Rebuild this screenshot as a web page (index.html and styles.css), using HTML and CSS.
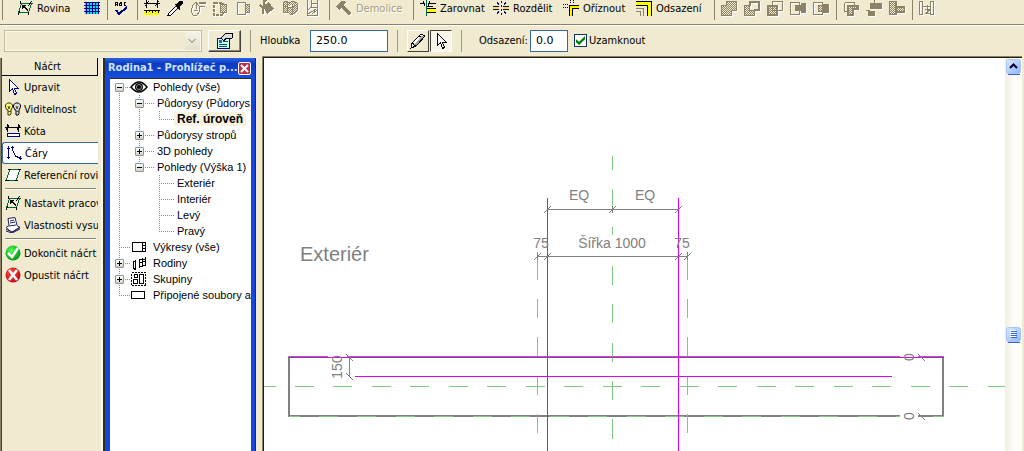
FILE: index.html
```html
<!DOCTYPE html>
<html lang="cs">
<head>
<meta charset="utf-8">
<title>Rodina1</title>
<link rel="stylesheet" href="styles.css">
</head>
<body>
<svg class="defs" aria-hidden="true">
  <defs>
    <pattern id="dots" width="2" height="2" patternUnits="userSpaceOnUse"><rect width="2" height="2" fill="#f1ebd0"/><path fill="#8b8268" d="M0 0h1v1h-1zM1 1h1v1h-1z"/></pattern>
    <linearGradient id="thumb" x2="1" y2="1"><stop stop-color="#dce9ff"/><stop offset="1" stop-color="#8fb4fb"/></linearGradient>
    <radialGradient id="ok" cx=".4" cy=".35" r=".7"><stop stop-color="#5f5"/><stop offset="1" stop-color="#008c14"/></radialGradient>
    <radialGradient id="no" cx=".4" cy=".35" r=".7"><stop stop-color="#ff5040"/><stop offset="1" stop-color="#c00010"/></radialGradient>
  </defs>
</svg>
<nav class="toolbar" aria-label="Nástroje">
  <i class="grip"></i>
  <button class="tool rovina"><svg class="icon" viewBox="0 0 16 16"><path d="M4.500 3.500h11M.5 12.500h11M4.500 3.500l-3 9M14.500 3.500l-3 9" stroke="#063" fill="none"/><path d="M3.500 1v3M15 1l-4 5M1 15l2-4M11.500 12v3" stroke="#000"/><path d="M5 5h4l-1 1 3 4-1 1-3-4-2 2z" fill="#000"/></svg><span>Rovina</span></button>
  <button class="tool" aria-label="Rastr"><svg class="icon" viewBox="0 0 16 16"><path fill="#00e0f0" d="M1 2h14v12h-14z"/><path stroke="#008" d="M2.500 2v12M5.500 2v12M8.500 2v12M11.500 2v12M14.500 2v12M0 2.500h16M0 5.500h16M0 8.500h16M0 11.500h16"/></svg></button>
  <i class="sep"></i>
  <button class="tool" aria-label="Pravopis"><svg class="icon" viewBox="0 0 16 16"><path d="M1.500 6v-3l1-1h1v4M1.500 4.500h2M5.500 2.500v3h2v-3h-2M5.500 3.500h2M12 2.500h-2v3h2" stroke="#000" fill="none"/><path d="M2 10l3 4 8-7" stroke="#008" stroke-width="2" fill="none"/></svg></button>
  <i class="sep"></i>
  <button class="tool" aria-label="Kóta"><svg class="icon" viewBox="0 0 16 16"><path d="M2.500 0v8M13.500 0v8M0 3.500h16M1 6l4-5M11 6l4-5" stroke="#000" fill="none"/><path fill="#ff0" d="M0 10h16v5h-16z"/><path d="M0 10.500h16M2.500 10v3M5.500 10v2M8.500 10v3M11.500 10v2M14.500 10v3" stroke="#000"/></svg></button>
  <button class="tool" aria-label="Kapátko"><svg class="icon" viewBox="0 0 16 16"><path d="M2 13l7-7 2 2-7 7H1z" fill="#fff" stroke="#000"/><path d="M8 4l2 0 3-3h2v3l-3 3v2z" fill="#000" stroke="#000"/></svg></button>
  <button class="tool" disabled aria-label="Pero"><svg class="icon" viewBox="0 0 16 16"><path d="M1 11l2-6 3-3 3 4 1 5-3 4H3zM6 3v6M4 10h4M9 2.500h7M9 3.500h7M10 6.500h5" fill="none" stroke="#8b8268"/></svg></button>
  <button class="tool" disabled aria-label="Výřez"><svg class="icon" viewBox="0 0 16 16"><path d="M2 2.500h8v12h-9v-12h4" fill="none" stroke="#8b8268" stroke-width="2" stroke-dasharray="3 1"/><path fill="url(#dots)" stroke="#8b8268" d="M7 4.500h6v8h-6z"/></svg></button>
  <button class="tool" disabled aria-label="Plocha"><svg class="icon" viewBox="0 0 16 16"><path d="M1.500 2.500h8v12h-8z" fill="none" stroke="#8b8268"/><path fill="url(#dots)" stroke="#8b8268" d="M9.500 4.500h4v8h-4z"/></svg></button>
  <button class="tool" disabled aria-label="Barva"><svg class="icon" viewBox="0 0 16 16"><path d="M4 6l6-4 5 7-7 5z" fill="#8b8268"/><path d="M5 6V1l3-1M1 5l3 3v6" fill="none" stroke="#8b8268" stroke-width="2"/></svg></button>
  <button class="tool" disabled aria-label="Stěny"><svg class="icon" viewBox="0 0 16 16"><path d="M1 3l3-2 3 2 4-2 4 2v8l-5 4-5-3-4 1zM5 3v9M10 5v10M1 6l9 2 4-3" fill="url(#dots)" stroke="#8b8268"/></svg></button>
  <button class="tool" disabled aria-label="Řez"><svg class="icon" viewBox="0 0 16 16"><path d="M2.500 0v15h10v-15M6 0v7h6M3 10l4-4M3 14l8-5M7 14l5-4M7 3h5" fill="none" stroke="#8b8268"/></svg></button>
  <i class="sep last"></i>
  <button class="tool demolice" disabled><svg class="icon" viewBox="0 0 16 16"><path d="M0 6l6-5 5 1-4 3 8 8-2 2-8-7-2 2z" fill="#8b8268"/></svg><span>Demolice</span></button>
  <i class="sep"></i>
  <button class="tool zarovnat"><svg class="icon" viewBox="0 0 16 16"><path stroke="#064" d="M6.500 0v16"/><path stroke="#000" d="M0 3.500h5M3 1l2 5M16 3.500h-6M10 1l-2 5" fill="none"/><path fill="#ff0" d="M8 9h8v3h-8z"/><path stroke="#000" d="M7 8.500h9M7 12.500h9M7 6.500h6"/></svg><span>Zarovnat</span></button>
  <button class="tool rozdelit"><svg class="icon" viewBox="0 0 16 16"><path fill="#fe0" d="M0 7h6v2h-6zM10 7h6v2h-6z"/><path stroke="#008" d="M0 6.500h6M0 9.500h6M10 6.500h6M10 9.500h6M8.500 1v2M8.500 5v2M8.500 9v2M8.500 13v2M4 2l2 3M13 2l-2 3M4 14l2-3M13 14l-2-3"/></svg><span>Rozdělit</span></button>
  <button class="tool oriznout"><svg class="icon" viewBox="0 0 16 16"><path stroke="#000" stroke-dasharray="1 1" d="M0 4.500h6M0 7.500h6M7.500 0v4M10.500 0v4"/><path d="M8 16V7h8" stroke="#000" stroke-width="4" fill="none"/><path d="M8 16V7h8" stroke="#fe0" stroke-width="2" fill="none"/></svg><span>Oříznout</span></button>
  <button class="tool odsazeni"><svg class="icon" viewBox="0 0 16 16"><path d="M0 3h13v13" stroke="#000" stroke-width="5" fill="none"/><path d="M0 3h13v13" stroke="#ff0" stroke-width="3" fill="none"/><path d="M0 8.500h7.500V16M0 11.500h4.500V16" stroke="#8b8268" fill="none"/></svg><span>Odsazení</span></button>
  <i class="sep"></i>
  <button class="tool" disabled aria-label="Spojit"><svg class="icon" viewBox="0 0 16 16"><path fill="url(#dots)" stroke="#8b8268" d="M5.500 1.500h10v9h-5v5h-10v-10h5z"/></svg></button>
  <button class="tool" disabled aria-label="Odečíst"><svg class="icon" viewBox="0 0 16 16"><path fill="none" stroke="#8b8268" stroke-width="2" d="M6 6v-4h9v8h-5"/><path fill="url(#dots)" stroke="#8b8268" d="M.5 5.500h5v5h5v5h-10z"/></svg></button>
  <button class="tool" disabled aria-label="Průnik"><svg class="icon" viewBox="0 0 16 16"><path fill="url(#dots)" stroke="#8b8268" stroke-width="2" d="M1 6h9v9h-9z"/><path fill="none" stroke="#8b8268" d="M5.500 1.500h10v9h-10z"/></svg></button>
  <button class="tool" disabled aria-label="Vyříznout"><svg class="icon" viewBox="0 0 16 16"><path fill="none" stroke="#8b8268" d="M.5 2.500h9v12h-9z"/><path fill="#8b8268" d="M5 5h6v-2h5v10h-5v-2h-6z"/></svg></button>
  <button class="tool" disabled aria-label="Nevyřezávat"><svg class="icon" viewBox="0 0 16 16"><path fill="none" stroke="#8b8268" d="M.5 2.500h9v12h-9z"/><path fill="#8b8268" d="M10 4h6v9h-6z"/><path fill="url(#dots)" stroke="#8b8268" d="M5.500 5.500h4v6h-4z"/></svg></button>
  <i class="sep"></i>
  <button class="tool" disabled aria-label="Geometrie"><svg class="icon" viewBox="0 0 16 16"><path fill="none" stroke="#8b8268" d="M1.500 2.500h10v3M1.500 2.500v9h3"/><path fill="url(#dots)" stroke="#8b8268" stroke-width="2" d="M5 6h10v3h-5v6h-5z"/></svg></button>
  <button class="tool" disabled aria-label="Rozdělit plochu"><svg class="icon" viewBox="0 0 16 16"><path fill="#8b8268" d="M4 3h12v6h-12zM2 11h7v5h-7zM8 0h1v3h-1zM0 10h4v1h-4z"/></svg></button>
  <button class="tool" disabled aria-label="Připojit"><svg class="icon" viewBox="0 0 16 16"><path fill="url(#dots)" stroke="#8b8268" d="M.5 1.500h7v5h8v6h-8v2h-7z"/><path stroke="#8b8268" stroke-width="2" d="M7 1v14M8 7h7M8 12h7"/></svg></button>
  <i class="sep"></i>
  <button class="tool" disabled aria-label="Stěna"><svg class="icon" viewBox="0 0 16 16"><path fill="none" stroke="#8b8268" d="M.5 1.500h3v13h-3zM11.500 1.500h3v13h-3zM4 6.500h8M6 9.500h5l-4 4h4M8.500 5v9"/></svg></button>
</nav>
<form class="options">
  <select class="type" disabled aria-label="Typ"><option></option></select>
  <button type="button" class="props" aria-label="Vlastnosti"><svg class="icon" viewBox="0 0 16 16"><path d="M.5 5.500h12v10h-12z" fill="#cfe" stroke="#008"/><path fill="#26b" d="M2 7h3v3h-3z"/><path stroke="#056" d="M6 8.500h5M2 11.500h8M2 13.500h8"/><path d="M4 5l4-4 7-1v5l-4 1-2-1-2 3z" fill="#ddd" stroke="#000"/></svg></button>
  <i class="sep"></i>
  <label class="depth-label" for="depth">Hloubka</label>
  <input class="depth" id="depth" type="text" value="250.0">
  <i class="sep"></i>
  <button type="button" class="mode" aria-label="Kreslit"><svg class="icon" viewBox="0 0 16 16"><path d="M1 15l1-5 9-9 4 2-9 10z" fill="#fff" stroke="#000"/><path d="M2 10l4 3M9 3l4 3" stroke="#000"/><path d="M5 12l8-9" stroke="#aaa" stroke-width="2"/></svg></button>
  <button type="button" class="mode pressed" aria-label="Vybrat"><svg class="icon" viewBox="0 0 16 16"><path d="M4.500.5v12l3-3 2 6 2-1-2-5h4z" fill="#fff" stroke="#000"/></svg></button>
  <i class="sep"></i>
  <label class="offset-label" for="offset">Odsazení:</label>
  <input class="offset" id="offset" type="text" value="0.0">
  <label class="lock"><input type="checkbox" checked>Uzamknout</label>
</form>
<main class="work">
  <aside class="design">
    <h2>Náčrt</h2>
    <button><svg class="icon" viewBox="0 0 16 16"><path d="M4.500.5v12l3-3 2 6 2-1-2-5h4z" fill="#fff" stroke="#008"/></svg><span>Upravit</span></button>
    <button><svg class="icon smooth" viewBox="0 0 16 16"><path d="M2 9L.5 6V4l2-2h3l2 2v2L6 9v4l-1 1H3V9z" fill="#ff6" stroke="#331"/><path d="M10 9L8.500 6V4l2-2h3l2 2v2L14 9v4l-1 1h-2V9z" fill="#ddd" stroke="#000"/><path d="M3 10.500h3M11 10.500h3M3 5l1 3 1-3M11 5l1 3 1-3" stroke="#553" fill="none"/></svg><span>Viditelnost</span></button>
    <button><svg class="icon" viewBox="0 0 16 16"><path d="M2.500 1v8M13.500 1v8M0 4.500h16M1 7l3-5M12 7l3-5" stroke="#000"/><path d="M2 10.500h12v3h-12z" fill="#fff" stroke="#008"/></svg><span>Kóta</span></button>
    <button class="current"><svg class="icon" viewBox="0 0 16 16"><path d="M2.500 1v13M1 3.500h3M1 12.500h3M6.500 1v4l3 6 4 2h3M5 2.500h3M14.500 11v4" stroke="#008" fill="none"/></svg><span>Čáry</span></button>
    <button><svg class="icon" viewBox="0 0 16 16"><path d="M5 2.500h10l-4 11H1z" fill="#fff" stroke="#063"/><path d="M3 2.500h3M13 2.500h3M0 13.500h4M10 13.500h3" stroke="#000"/></svg><span>Referenční rovina</span></button>
    <hr>
    <button><svg class="icon" viewBox="0 0 16 16"><path d="M4.500 3.500h11M.5 12.500h11M4.500 3.500l-3 9M14.500 3.500l-3 9" stroke="#063" fill="#fff"/><path d="M3.500 1v3M15 1l-4 5M1 15l2-4M11.500 12v3" stroke="#000"/><path d="M5 5h4l-1 1 3 4-1 1-3-4-2 2z" fill="#000"/></svg><span>Nastavit pracovní rovinu</span></button>
    <button><svg class="icon smooth" viewBox="0 0 16 16"><path d="M3 1.500l7-1 2 8 3 2-8 5-6-5 3-2z" fill="#fff" stroke="#225"/><path d="M5 4l4-1M5 6l5-1M4 9l7-1M1 12l6 3 8-5M1 14l6 2 8-4" stroke="#225" fill="none"/></svg><span>Vlastnosti vysunutí</span></button>
    <hr>
    <button><svg class="icon smooth" viewBox="0 0 16 16"><circle cx="8" cy="8" r="7.500" fill="url(#ok)"/><path d="M3 8l4 4 6-9" stroke="#fff" stroke-width="2.500" fill="none"/></svg><span>Dokončit náčrt</span></button>
    <button><svg class="icon smooth" viewBox="0 0 16 16"><circle cx="8" cy="8" r="7.500" fill="url(#no)"/><path d="M4 3l8 10M12 3L4 13" stroke="#fff" stroke-width="2.500"/></svg><span>Opustit náčrt</span></button>
  </aside>
  <section class="browser">
    <header><h2>Rodina1 - Prohlížeč p...</h2><button aria-label="Zavřít"><svg viewBox="0 0 9 9"><path d="M1 1l7 7M8 1L1 8" stroke="#fff" stroke-width="2"/></svg></button></header>
    <div class="tree" role="tree">
      <div class="row" role="treeitem"><i class="cell first"><button class="exp" aria-label="Sbalit"></button></i><svg class="node smooth" viewBox="0 0 18 14"><path d="M1 7q4-5 8-5t8 5q-4 5-8 5t-8-5z" fill="#fff" stroke="#000" stroke-width="1.500"/><circle cx="9" cy="7" r="4"/><circle cx="9" cy="7" r="2.500" fill="none" stroke="#999"/></svg><span>Pohledy (vše)</span></div>
      <div class="row" role="treeitem"><i class="cell v"></i><i class="cell wide t"><button class="exp" aria-label="Sbalit"></button></i><span>Půdorysy (Půdorys podlaží)</span></div>
      <div class="row" role="treeitem"><i class="cell v"></i><i class="cell v"></i><i class="cell wide l"></i><strong>Ref. úroveň</strong></div>
      <div class="row" role="treeitem"><i class="cell v"></i><i class="cell wide t"><button class="exp plus" aria-label="Rozbalit"></button></i><span>Půdorysy stropů</span></div>
      <div class="row" role="treeitem"><i class="cell v"></i><i class="cell wide t"><button class="exp plus" aria-label="Rozbalit"></button></i><span>3D pohledy</span></div>
      <div class="row" role="treeitem"><i class="cell v"></i><i class="cell wide l"><button class="exp" aria-label="Sbalit"></button></i><span>Pohledy (Výška 1)</span></div>
      <div class="row" role="treeitem"><i class="cell v"></i><i class="cell"></i><i class="cell wide t"></i><span>Exteriér</span></div>
      <div class="row" role="treeitem"><i class="cell v"></i><i class="cell"></i><i class="cell wide t"></i><span>Interiér</span></div>
      <div class="row" role="treeitem"><i class="cell v"></i><i class="cell"></i><i class="cell wide t"></i><span>Levý</span></div>
      <div class="row" role="treeitem"><i class="cell v"></i><i class="cell"></i><i class="cell wide l"></i><span>Pravý</span></div>
      <div class="row" role="treeitem"><i class="cell t"></i><svg class="node" viewBox="0 0 18 14"><path d="M2.500 2.500h13v9h-13zM12.500 2v10M13 5.500h3M13 8.500h3" fill="#fff" stroke="#000"/></svg><span>Výkresy (vše)</span></div>
      <div class="row" role="treeitem"><i class="cell t"><button class="exp plus" aria-label="Rozbalit"></button></i><svg class="node" viewBox="0 0 18 14"><path d="M3.500 5v7l1 1h1V4M5.500 5v8M9.500 3h6v6l-6 2zM12.500 2v9M9 6.500l7-1M3 5.500h3" fill="none" stroke="#000"/><path d="M9.500 3v9M15.500 1v8" stroke="#000"/></svg><span>Rodiny</span></div>
      <div class="row" role="treeitem"><i class="cell t"><button class="exp plus" aria-label="Rozbalit"></button></i><svg class="node" viewBox="0 0 18 14"><path d="M1.500.5h14v13h-14z" fill="none" stroke="#000" stroke-dasharray="2 1"/><path d="M4.500 2.500h3v3h-3zM3.500 7.500h4v4h-4zM9.500 2.500h4v9h-4z" fill="none" stroke="#000"/></svg><span>Skupiny</span></div>
      <div class="row" role="treeitem"><i class="cell l"></i><svg class="node" viewBox="0 0 18 14"><path d="M1.500 3.500h13v7h-13z" fill="#fff" stroke="#000"/></svg><span>Připojené soubory aplikace Revit</span></div>
    </div>
  </section>
  <section class="view">
    <svg class="drawing" role="img" aria-label="Pohled Exteriér">
      <g transform="translate(-264 -58)" fill="none">
        <g stroke="#808080">
          <path stroke-width="2" d="M289 356v61M943 356v61M288 416h612M918 416h26"/>
          <path d="M289 356.500h39M347 356.500h553M918 356.500h26"/>
        </g>
        <g stroke="#7fc87f">
          <path d="M612.500 156v14M612.500 189v19M612.500 227v8M612.500 266v19M612.500 304v19M612.500 343v19M612.500 381v19M612.500 419v20"/>
          <path d="M537.500 257v23M537.500 299v19M537.500 337v19M537.500 377v18M537.500 414v19M687.500 257v23M687.500 299v19M687.500 337v19M687.500 377v18M687.500 414v19"/>
          <path d="M264 386.500h12"/>
          <path stroke-dasharray="19 19 19 20" d="M295 386.500h710"/>
          <path d="M289 416.500h11M933 416.500h11"/>
          <path stroke-dasharray="19 19 19 20" d="M319 416.500h581"/>
        </g>
        <g stroke="#d0f">
          <path d="M547.500 198v900M678.500 198v900M355 376.500h537M289 357.500h655"/>
        </g>
        <g stroke="#808080">
          <path d="M547 209.500h132M612.500 206v7M537 256.500h151M537.500 252v8M687.500 252v8M349.500 357v20"/>
          <path d="M544 213l7-7M609 213l7-7M675 213l7-7M534 260l7-7M544 260l7-7M675 260l7-7M684 260l7-7M346 354l7 7M346 373l7 7M918 354l7 7M918 413l7 7"/>
        </g>
        <g class="dims">
          <text x="579" y="200">EQ</text><text x="645" y="200">EQ</text>
          <text x="612" y="248">Šířka 1000</text><text x="541" y="248">75</text><text x="682" y="248">75</text>
          <text transform="translate(342 367) rotate(-90)">150</text>
          <text transform="translate(914 357) rotate(-90)">0</text>
          <text transform="translate(914 416) rotate(-90)">0</text>
        </g>
        <text class="caption" x="300" y="261">Exteriér</text>
      </g>
    </svg>
    <div class="scroll">
      <button aria-label="Nahoru"><svg viewBox="0 0 17 17"><rect x="1.500" y="1.500" width="14" height="14" rx="2" fill="url(#thumb)" stroke="#a8c4f8"/><path d="M3 16.500h12" stroke="#36c"/><path d="M5 10l3.500-3.500L12 10" fill="none" stroke="#003" stroke-width="2"/></svg></button>
      <button class="thumb" aria-label="Posuvník"><svg viewBox="0 0 17 17"><rect x="1.500" y="1.500" width="14" height="14" rx="2" fill="url(#thumb)" stroke="#a8c4f8"/><path d="M3 16.500h12" stroke="#36c"/><path d="M5 4.500h6M5 6.500h6M5 8.500h6M5 10.500h6" stroke="#fff"/><path d="M6 5.500h6M6 7.500h6M6 9.500h6M6 11.500h6" stroke="#36c"/></svg></button>
    </div>
  </section>
</main>
</body>
</html>
```
FILE: styles.css
```css
* { box-sizing: border-box; }
html, body { height: 100%; }
body {
  margin: 0;
  display: flex;
  flex-direction: column;
  background: #f0ead0;
  color: #000;
  font: 11px/16px "DejaVu Sans Condensed", "DejaVu Sans", sans-serif;
  font-stretch: condensed;
  overflow: hidden;
}
button, input, select { font: inherit; color: inherit; margin: 0; padding: 0; }
button { border: 0; background: none; }
h2 { margin: 0; font-size: 11px; line-height: 18px; }
.defs { width: 0; height: 0; flex: none; display: block; }
.icon { width: 16px; height: 16px; flex: none; display: block; shape-rendering: crispEdges; }
.icon.smooth { shape-rendering: auto; }

.toolbar {
  flex: none;
  height: 25px;
  padding: 0 0 4px 2px;
  display: flex;
  border-bottom: 1px solid #8b8268;
}
.toolbar .grip { width: 12px; margin-right: 3px; border-left: 1px solid #8b8268; }
.tool { flex: none; width: 23px; height: 18px; display: flex; gap: 4px; white-space: nowrap; line-height: 18px; }
.tool:disabled { color: #a39a80; text-shadow: 1px 1px #fff; }
.tool:disabled .icon { filter: drop-shadow(1px 1px 0 #fff); }
.toolbar .sep { flex: none; width: 7px; border-left: 1px solid #8b8268; }
.toolbar .last { margin-left: 1px; }
.rovina { width: 67px; }
.demolice { width: 77px; }
.zarovnat { width: 73px; }
.rozdelit { width: 70px; }
.oriznout { width: 73px; }
.odsazeni { width: 78px; }

.options {
  flex: none;
  height: 31px;
  padding: 3px 0 4px 4px;
  display: flex;
  align-items: center;
  border-top: 1px solid #fff;
}
.options .sep { flex: none; width: 1px; height: 22px; background: #a39a80; margin: 0 9px; }
.type {
  width: 198px;
  height: 22px;
  appearance: none;
  border: 1px solid #c0bca0;
  outline: 1px solid #fbf8ea;
  outline-offset: -2px;
  opacity: 1;
  background:
    linear-gradient(45deg, transparent 5px, #b4b09c 5px 7px, transparent 7px) 182px 8px / 5px 7px no-repeat,
    linear-gradient(-45deg, transparent 5px, #b4b09c 5px 7px, transparent 7px) 187px 8px / 5px 7px no-repeat,
    linear-gradient(#f4f2e6, #e4e0cc) right 1px center / 15px 18px no-repeat,
    #f0ead0;
}
.props, .mode {
  height: 22px;
  display: flex;
  align-items: center;
  justify-content: center;
  border: 1px solid;
  border-color: #fff #404038 #404038 #fff;
}
.props { width: 33px; margin-left: 6px; box-shadow: inset -1px -1px #8b8268; }
.mode { width: 22px; }
.mode + .mode { margin-left: 1px; }
.mode.pressed { border-color: #404038 #fff #fff #404038; background: #f8f5e8; }
.depth-label { width: 50px; }
.offset-label { width: 51px; margin-left: 8px; }
.depth, .offset { height: 22px; padding: 0 5px; border: 1px solid #36699c; background: #fff; font-family: "DejaVu Sans", sans-serif; font-stretch: normal; }
.depth { width: 78px; }
.offset { width: 38px; }
.lock { display: flex; align-items: center; gap: 2px; margin-left: 6px; }
.lock input {
  appearance: none;
  width: 13px;
  height: 13px;
  border: 1px solid #14325c;
  background: #fff;
  display: grid;
  place-items: center;
}
.lock input:checked::before {
  content: "";
  width: 9px;
  height: 9px;
  background: #008000;
  clip-path: polygon(0 35%, 35% 65%, 100% 0, 100% 35%, 35% 100%, 0 70%);
}

.work { flex: 1; min-height: 0; display: flex; }
.design {
  flex: none;
  width: 103px;
  margin-top: 2px;
  padding-right: 5px;
  border-left: 1px solid #8b8268;
  box-shadow: inset 1px 0 #404038, inset -2px 0 #fbf8ea;
}
.design h2 {
  height: 18px;
  margin-left: 1px;
  font-weight: normal;
  text-align: center;
  padding-right: 4px;
  border-right: 1px solid #000;
  border-bottom: 1px solid #000;
}
.design button {
  display: flex;
  align-items: center;
  gap: 3px;
  width: 96px;
  height: 22px;
  margin-left: 1px;
  padding-left: 3px;
  line-height: 18px;
  white-space: nowrap;
  overflow: hidden;
}
.design button span { padding-top: 1px; }
.design .current { background: #fff; border: 1px solid #36699c; border-right: 0; border-radius: 3px 0 0 3px; }
.design hr { height: 2px; margin: 2px 2px 2px 4px; border: 0; border-top: 1px solid #8b8268; background: #fff; }

.browser {
  flex: none;
  width: 153px;
  margin-top: 2px;
  padding: 0 4px 0 5px;
  display: flex;
  flex-direction: column;
  background: #1746dc;
  border: solid #302c20;
  border-width: 0 1px 0 2px;
}
.browser header {
  height: 20px;
  margin: 0 -4px 0 -5px;
  padding: 0 4px 0 3px;
  display: flex;
  align-items: center;
  justify-content: space-between;
  background: linear-gradient(#2a62e8, #0a3cc0 30%, #1550dc);
  color: #d4e2fa;
  white-space: nowrap;
}
.browser header button { width: 13px; height: 13px; display: grid; place-items: center; border: 1px solid #fff; border-radius: 2px; background: #b83048; }
.browser header svg { width: 9px; height: 9px; display: block; }
.tree {
  flex: 1;
  min-height: 0;
  overflow: hidden;
  border-top: 1px solid #302c20;
  background: #fff;
  font-family: "Liberation Sans", Arial, sans-serif;
}
.row { display: flex; align-items: center; height: 16px; white-space: nowrap; }
.row strong { background: #f8f2de; padding: 0 3px; margin-left: -1px; font-size: 12px; line-height: 14px; }
.row span { padding-left: 2px; }
.row .node + span { padding-left: 5px; }
.node { flex: none; width: 18px; height: 14px; shape-rendering: crispEdges; }
.node.smooth { shape-rendering: auto; }
.cell {
  --dots-v: repeating-linear-gradient(#8c8c80 0 1px, transparent 1px 2px);
  --dots-h: repeating-linear-gradient(90deg, #8c8c80 0 1px, transparent 1px 2px);
  flex: none;
  display: flex;
  align-items: center;
  width: 20px;
  height: 16px;
  padding-left: 5px;
}
.wide { width: 25px; }
.v { background: var(--dots-v) 9px 0 / 1px 16px no-repeat; }
.t { background: var(--dots-v) 9px 0 / 1px 16px no-repeat, var(--dots-h) 9px 8px / 16px 1px no-repeat; }
.l { background: var(--dots-v) 9px 0 / 1px 8px no-repeat, var(--dots-h) 9px 8px / 16px 1px no-repeat; }
.first { background: var(--dots-v) 9px 8px / 1px 8px no-repeat, var(--dots-h) 9px 8px / 16px 1px no-repeat; }
.exp {
  width: 9px;
  height: 9px;
  border: 1px solid #7898b5;
  border-radius: 1px;
  background: linear-gradient(#000, #000) center / 5px 1px no-repeat, linear-gradient(#fff, #d8d2c4);
}
.exp.plus { background: linear-gradient(#000, #000) center / 5px 1px no-repeat, linear-gradient(#000, #000) center / 1px 5px no-repeat, linear-gradient(#fff, #d8d2c4); }

.view {
  flex: 1;
  min-width: 0;
  display: flex;
  margin: 0 2px 0 6px;
  background: #fff;
  border: 1px solid #8b8268;
  border-width: 1px 0 0 1px;
  box-shadow: inset 1px 1px #201c10;
  padding: 1px 0 0 1px;
}
.drawing { flex: 1; min-width: 0; height: 100%; display: block; overflow: hidden; shape-rendering: crispEdges; }
.drawing text { font-family: "Liberation Sans", Arial, sans-serif; fill: #808080; }
.dims { font-size: 14px; text-anchor: middle; }
.caption { font-size: 20px; }
.scroll {
  flex: none;
  width: 17px;
  display: flex;
  flex-direction: column;
  justify-content: space-between;
  background: linear-gradient(90deg, #f0eee0, #fefdf8 50%);
}
.scroll button { height: 17px; }
.scroll svg { width: 17px; height: 17px; display: block; }
.scroll .thumb { margin-bottom: 108px; }
```
